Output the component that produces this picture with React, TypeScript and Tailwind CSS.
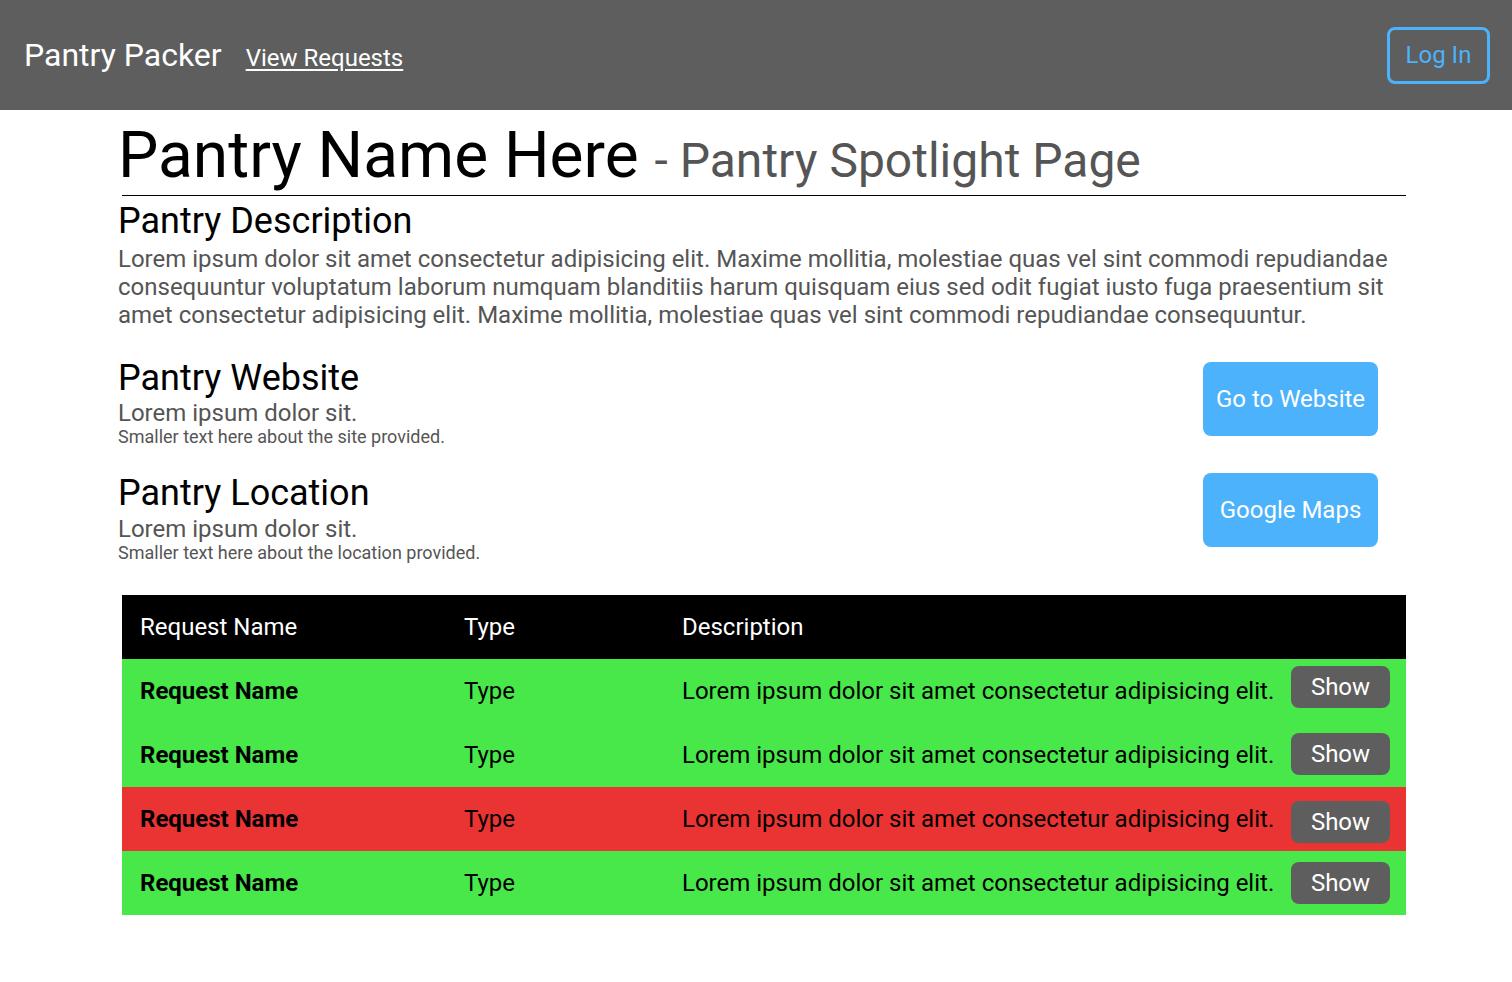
import React from 'react';

type Request = {
  id: number;
  name: string;
  type: string;
  description: string;
  fulfilled: boolean;
  btnClass: string;
};

const requests: Request[] = [
  { id: 1, name: 'Request Name', type: 'Type', description: 'Lorem ipsum dolor sit amet consectetur adipisicing elit.', fulfilled: true, btnClass: 'mt-[7px]' },
  { id: 2, name: 'Request Name', type: 'Type', description: 'Lorem ipsum dolor sit amet consectetur adipisicing elit.', fulfilled: true, btnClass: 'mt-[10px]' },
  { id: 3, name: 'Request Name', type: 'Type', description: 'Lorem ipsum dolor sit amet consectetur adipisicing elit.', fulfilled: false, btnClass: 'mt-[14px]' },
  { id: 4, name: 'Request Name', type: 'Type', description: 'Lorem ipsum dolor sit amet consectetur adipisicing elit.', fulfilled: true, btnClass: 'mt-[11px]' },
];

const InfoSection: React.FC<{ title: string; text: string; small: string; action: string; btnClass: string; textClass: string }> = ({
  title,
  text,
  small,
  action,
  btnClass,
  textClass,
}) => (
  <div className="flex items-start justify-between pr-[28px]">
    <div>
      <h2 className="text-[36px] leading-[42px] text-black">{title}</h2>
      <p className={`text-[24px] leading-[28px] text-[#555555] ${textClass}`}>{text}</p>
      <p className="text-[18px] leading-[20px] text-[#555555]">{small}</p>
    </div>
    <button className={`w-[175px] h-[74px] rounded-lg bg-[#4cb2fb] text-white text-[24px] ${btnClass}`}>{action}</button>
  </div>
);

export default function App() {
  return (
    <div className="min-h-screen bg-white font-['Roboto',sans-serif]">
      <header className="h-[110px] bg-[#5e5e5e] flex items-center justify-between pl-6 pr-[22px]">
        <div className="flex items-baseline gap-[24px]">
          <span className="text-[32px] text-white">Pantry Packer</span>
          <a href="#" className="text-[24px] text-white underline underline-offset-[3px]">View Requests</a>
        </div>
        <button className="w-[103px] h-[57px] rounded-lg border-[3px] border-[#4cb2fb] text-[#4cb2fb] text-[24px]">Log In</button>
      </header>

      <main className="pl-[118px] w-[1406px]">
        <h1 className="mt-2 flex items-baseline text-black">
          <span className="text-[64px] leading-[75px]">Pantry Name Here</span>
          <span className="ml-[16px] text-[48px] leading-[56px] text-[#555555]">- Pantry Spotlight Page</span>
        </h1>
        <hr className="ml-[4px] mt-[2px] border-t border-black" />

        <section className="mt-[4px]">
          <h2 className="text-[36px] leading-[42px] text-black">Pantry Description</h2>
          <p className="mt-[3px] text-[24px] leading-[28px] text-[#555555] pr-[10px]">
            Lorem ipsum dolor sit amet consectetur adipisicing elit. Maxime mollitia, molestiae quas vel sint commodi repudiandae
            consequuntur voluptatum laborum numquam blanditiis harum quisquam eius sed odit fugiat iusto fuga praesentium sit
            amet consectetur adipisicing elit. Maxime mollitia, molestiae quas vel sint commodi repudiandae consequuntur.
          </p>
        </section>

        <div className="mt-[28px] flex flex-col gap-[25px]">
          <InfoSection
            title="Pantry Website"
            text="Lorem ipsum dolor sit."
            small="Smaller text here about the site provided."
            action="Go to Website"
            btnClass="mt-[5px]"
            textClass=""
          />
          <InfoSection
            title="Pantry Location"
            text="Lorem ipsum dolor sit."
            small="Smaller text here about the location provided."
            action="Google Maps"
            btnClass="mt-[1px]"
            textClass="mt-[1px]"
          />
        </div>

        <div className="ml-[4px] mt-[32px] text-[24px]">
          <div className="grid grid-cols-[324px_218px_1fr_auto] items-center h-[64px] bg-black text-white pl-[18px]">
            <span>Request Name</span>
            <span>Type</span>
            <span>Description</span>
            <span />
          </div>
          {requests.map(r => (
            <div
              key={r.id}
              className={`grid grid-cols-[324px_218px_1fr_auto] items-center h-[64px] pl-[18px] pr-4 text-black ${
                r.fulfilled ? 'bg-[#48e84b]' : 'bg-[#ea3333]'
              }`}
            >
              <span className="font-bold">{r.name}</span>
              <span>{r.type}</span>
              <span>{r.description}</span>
              <button className={`self-start w-[99px] h-[42px] rounded-lg bg-[#5e5e5e] text-white ${r.btnClass}`}>Show</button>
            </div>
          ))}
        </div>
      </main>
    </div>
  );
}
